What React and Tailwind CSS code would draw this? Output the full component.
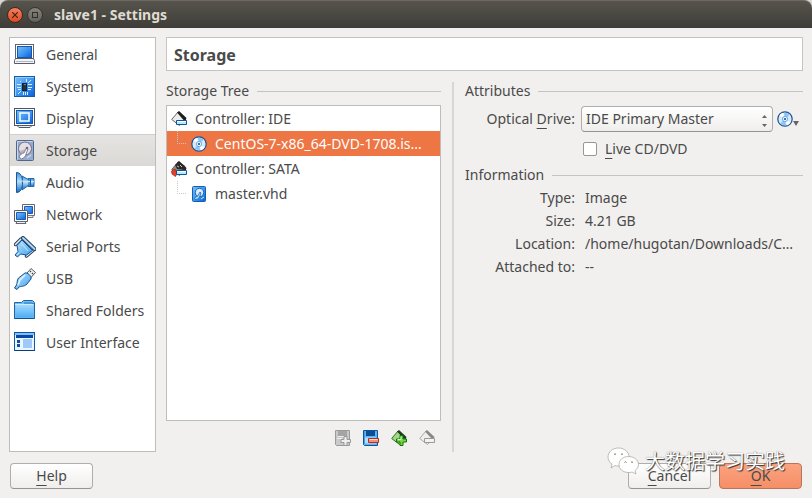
import React, { useState } from "react";

function Gradients() {
  return (
    <svg className="absolute h-0 w-0" aria-hidden="true">
      <defs>
        <linearGradient id="screen" x1="0" y1="0" x2="1" y2="1">
          <stop offset="0" stopColor="#7dbdf6" />
          <stop offset="0.5" stopColor="#3f97f3" />
          <stop offset="1" stopColor="#0a5fd8" />
        </linearGradient>
        <linearGradient id="sky" x1="0" y1="0" x2="1" y2="1">
          <stop offset="0" stopColor="#c4e5fd" />
          <stop offset="1" stopColor="#3aa0ee" />
        </linearGradient>
        <linearGradient id="folder" x1="0" y1="0" x2="0" y2="1">
          <stop offset="0" stopColor="#a6daff" />
          <stop offset="1" stopColor="#49aef5" />
        </linearGradient>
        <linearGradient id="cone" x1="0" y1="0" x2="0" y2="1">
          <stop offset="0" stopColor="#3b93de" />
          <stop offset="0.45" stopColor="#b8dffa" />
          <stop offset="1" stopColor="#1668bd" />
        </linearGradient>
      </defs>
    </svg>
  );
}

function Icon({ children, size = 22 }) {
  return (
    <svg
      width={size}
      height={size}
      viewBox={`0 0 ${size} ${size}`}
      className="shrink-0"
      fill="none"
      aria-hidden="true"
    >
      {children}
    </svg>
  );
}

const GeneralIcon = () => (
  <Icon>
    <rect x="1.5" y="0.5" width="18" height="14" fill="#fff" stroke="#5d6475" />
    <rect x="3.5" y="2.5" width="14" height="11" fill="url(#screen)" stroke="#1d55a8" />
    <path d="M1.5 14.5h18l1 2v3h-20v-3z" fill="#f4f4f7" stroke="#575c6c" />
    <path d="M2 17.5h17" stroke="#b4b7c1" />
  </Icon>
);
const SystemIcon = () => (
  <Icon>
    <rect x="0.500" y="0.500" width="20" height="20" fill="url(#screen)" stroke="#155ba8" />
    <path d="M1.500 20V1.500H20" stroke="#93cdfa" />
    <path d="M3 8.500h4M3 11.500h4M4 13.500h3M14 8.500h4M14 11.500h4M14 13.500h3M9.500 16v3M11.500 16v3M13.500 16v3M12.500 3v3M17 4l-3 3M6 5l1 1M4 18l3-3" stroke="#d8efff" />
    <rect x="8.500" y="7.500" width="4" height="7" fill="#26313d" stroke="#0f2337" />
    <path d="M10 8.500h2" stroke="#79828c" />
  </Icon>
);
const DisplayIcon = () => (
  <Icon>
    <rect x="0.500" y="0.500" width="20" height="17" fill="#fff" stroke="#4e5566" />
    <rect x="2.500" y="2.500" width="16" height="13" fill="url(#screen)" stroke="#145bb5" />
    <rect x="6" y="5" width="9" height="8" stroke="#fff" strokeWidth="1.500" />
    <path d="M3 17.500h15l-2 2H5z" fill="#eee" stroke="#4e5566" />
  </Icon>
);
const StorageIcon = () => (
  <Icon>
    <rect x="2.500" y="0.500" width="17" height="20" rx="1" fill="#95abd0" stroke="#50678c" />
    <path d="M3.500 19.500V1.500h15" stroke="#c8d6ec" />
    <circle cx="11" cy="8.500" r="6.500" fill="#e4dfe4" stroke="#716f86" />
    <path d="M6 11c1 3 3 3 3 3l3-5" fill="#bab2bd" />
    <path d="M5 17c1-2 3-4 5-4l2.500-5 1.500 1-2 5c0 2-2 4-4.500 5z" fill="#fff" stroke="#6b6a80" strokeWidth="0.800" />
    <circle cx="13" cy="8" r="1.300" fill="#79657b" />
    <path d="M13 18l4-3" stroke="#ced9ea" strokeWidth="1.500" />
  </Icon>
);
const AudioIcon = () => (
  <Icon>
    <path d="M14 6.500h6v8h-6z" fill="url(#cone)" stroke="#2669a9" />
    <path d="M8 4l7 4v5l-7 5z" fill="url(#cone)" stroke="#1b68b0" />
    <path d="M2.500 0.500c4 0 6 4 6 10s-2 10-6 10z" fill="url(#cone)" stroke="#17579f" />
    <path d="M8 9l6 0.500h6" stroke="#caeaff" />
    <path d="M16.500 7v7" stroke="#1763b3" />
  </Icon>
);
const NetworkIcon = () => (
  <Icon>
    <path d="M8.500 0.500h12v11h-12z" fill="#fff" stroke="#626878" />
    <path d="M10.500 2.500h8v7h-8z" fill="url(#screen)" stroke="#235ca4" />
    <path d="M13 11.500h6v2h-6z" fill="#eee" stroke="#737887" />
    <path d="M0.500 6.500h13v11h-13z" fill="#fff" stroke="#555d70" />
    <path d="M2.500 8.500h9v7h-9z" fill="url(#screen)" stroke="#235ca4" />
    <path d="M3 17.500h8l1 2H2z" fill="#eee" stroke="#626878" />
  </Icon>
);
const SerialIcon = () => (
  <Icon>
    <path d="M7 3L1.500 8.500M19.500 14l-7 6" stroke="#243d5c" strokeWidth="3.500" strokeLinecap="round" />
    <path d="M7 3L1.500 8.500M19.500 14l-7 6" stroke="#e6eef4" strokeWidth="1.500" strokeLinecap="round" />
    <path d="M8 4l10.500 10.500-6 4.500-6-1-3 3-2.500-2 3-3.500-1-6z" fill="url(#sky)" stroke="#155794" />
    <path d="M9 2l11.500 11" stroke="#22436b" strokeWidth="4" strokeLinecap="round" />
    <path d="M9 2l11.500 11" stroke="#b5d5ec" strokeWidth="2" strokeLinecap="round" />
    <path d="M7 7l7 8M5 17l-2 2" stroke="#c9e8fd" />
  </Icon>
);
const UsbIcon = () => (
  <Icon>
    <path d="M13 5l4-4.500 4.500 4-4.500 5z" fill="#f3f2f2" stroke="#555a63" />
    <path d="M16 4l1-1M18 6l1-1" stroke="#444" strokeWidth="1.400" />
    <path d="M11 5c2-1 7 3 6 6l-4 5c-3 3-6 2-8 3l-2 2.500-2.500-1.500 2-3c1-2 0-4 2-7z" fill="url(#sky)" stroke="#17538b" />
    <path d="M11 7l-5 5-2 5" stroke="#e5f6ff" strokeWidth="1.500" />
  </Icon>
);
const FolderIcon = () => (
  <Icon>
    <path d="M0.500 18.500V2.500h7l2-2h9l2 2v16z" fill="#74bdf1" stroke="#1b66a6" />
    <path d="M1.500 4.500h18v13h-18z" fill="url(#folder)" />
    <path d="M1 4.500h19" stroke="#ccecff" />
    <path d="M10 3h8l2 1" stroke="#2676b7" />
    <path d="M0.500 18.500h20" stroke="#14528c" />
  </Icon>
);
const InterfaceIcon = () => (
  <Icon>
    <rect x="0.500" y="0.500" width="20" height="18" fill="#e9f5ff" stroke="#1456a5" />
    <path d="M1 1h19v2H1z" fill="#82bdf4" />
    <path d="M2 3h17v3H2z" fill="#0648a5" />
    <path d="M3 8h3v3H3zM3 12h3v3H3z" fill="#174f9c" />
    <path d="M9 7h9v9H9z" fill="#9fc9fa" />
    <path d="M0.500 18.500h20" stroke="#083d7d" />
  </Icon>
);

function Disc() {
  return (
    <Icon size={16}>
      <circle cx="8" cy="8" r="7.200" fill="#d5eafb" stroke="#1b5196" strokeWidth="1.200" />
      <path d="M8 8L2.500 4.500A6.500 6.500 0 0 1 6 1.800zM8 8l5.500 3.500a6.500 6.500 0 0 1-3.500 2.700z" fill="#fff" />
      <path d="M8 8L7 1.700a6.300 6.300 0 0 1 5.500 2zM8 8l1 6.300a6.300 6.300 0 0 1-5.500-2z" fill="#8fc3f0" />
      <circle cx="8" cy="8" r="3" fill="#6daeea" />
      <circle cx="8" cy="8" r="2" fill="#fff" />
      <circle cx="8" cy="8" r="1.100" fill="#164a96" />
    </Icon>
  );
}
function HardDisk() {
  return (
    <Icon size={16}>
      <rect x="1.500" y="0.500" width="13" height="15" rx="1" fill="url(#screen)" stroke="#1560ac" />
      <circle cx="8.500" cy="6.500" r="4.200" fill="#d5ecff" stroke="#1767b6" />
      <path d="M3.500 12.500c1-2 3-2 3-2L9 6l1 1-1.500 4c-1 2-3 3-5 2z" fill="#b1dcfb" stroke="#1763ae" strokeWidth="0.800" />
      <path d="M10 13l3-2" stroke="#cfe8ff" />
    </Icon>
  );
}
function Controller({ sata }) {
  return (
    <Icon size={16}>
      <path d="M7 1l7.500 7.500-6 6L0.700 8.500z" fill={sata ? "#8a8a8a" : "#ececec"} stroke="#666" />
      <path d="M6 1.500L8 0l7.500 7-1 2.500-2-0.500z" fill="#1d1d1d" />
      {sata && <path d="M4 4l4-3.500 6 4.500 1 4-9-1z" fill="#2d2b29" />}
      {sata && <path d="M6 5l2 1M9 4l2 2" stroke="#c9c2bd" />}
      {sata && <path d="M4 8l-3.500 2 0.500 3 3.500 2.500 1.500-3z" fill="#e4402b" stroke="#a92012" strokeWidth="0.700" />}
      <path d="M5.500 9.500h10v4h-10z" fill="#bae8ff" stroke="#0b559a" />
      <path d="M6 10.500h9" stroke="#fff" />
    </Icon>
  );
}

function AddAttachment() {
  return (
    <Icon size={16}>
      <path d="M0.500 0.500h14v15h-13l-1-1z" fill="#c9c9c9" stroke="#9a9a9a" />
      <path d="M3 1h9v5H3z" fill="#a4a4a4" />
      <path d="M3 6.500h9M2 8.500h5" stroke="#eee" />
      <path d="M9 6.500h3v3h3.500v3H12v3H9v-3H6v-3h3z" fill="#eee" stroke="#999" />
    </Icon>
  );
}
function RemoveAttachment() {
  return (
    <Icon size={16}>
      <path d="M0.500 0.500h14v15h-13l-1-1z" fill="#62b3f2" stroke="#08569d" />
      <path d="M3 1h9v5H3z" fill="#0a4e96" />
      <path d="M2 7.500h11v6H2z" fill="#b2defc" />
      <path d="M1.500 1v13" stroke="#4e9edf" />
      <path d="M5.500 8.500h10v4h-10z" fill="#f58e73" stroke="#b72b20" />
      <path d="M6.500 9.500h8" stroke="#ffe0d5" />
    </Icon>
  );
}
function AddController() {
  return (
    <Icon size={16}>
      <path d="M7 1l7.500 7.500-6 6L0.700 8.500z" fill="#a5d58a" stroke="#267414" />
      <path d="M6 1.500L8 0l7.500 7-1 2-2-0.500z" fill="#203b1b" />
      <path d="M9 5.500h3v3.500h3.500v3H12v3.500H9V12H5.500V9H9z" fill="#72d847" stroke="#197008" />
      <path d="M10 6.500v3H6.500" stroke="#d5ffbd" />
    </Icon>
  );
}
function RemoveController() {
  return (
    <Icon size={16}>
      <path d="M7 1l7.500 7.500-6 6L0.700 8.500z" fill="#eee" stroke="#aaa" />
      <path d="M6 1.500L8 0l7.500 7-1 2-2-0.500z" fill="#888" />
      <path d="M5.500 8.500h10v4h-10z" fill="#f2f2f2" stroke="#999" />
    </Icon>
  );
}

const pages = [
  ["General", GeneralIcon],
  ["System", SystemIcon],
  ["Display", DisplayIcon],
  ["Storage", StorageIcon],
  ["Audio", AudioIcon],
  ["Network", NetworkIcon],
  ["Serial Ports", SerialIcon],
  ["USB", UsbIcon],
  ["Shared Folders", FolderIcon],
  ["User Interface", InterfaceIcon],
];

const tools = [
  ["Add attachment", AddAttachment, true],
  ["Remove attachment", RemoveAttachment, false],
  ["Add controller", AddController, false],
  ["Remove controller", RemoveController, true],
];

const details = [
  ["Type:", "Image"],
  ["Size:", "4.21 GB"],
  ["Location:", "/home/hugotan/Downloads/C…"],
  ["Attached to:", "--"],
];

function GroupTitle({ children }) {
  return (
    <h2 className="flex h-[18px] items-center gap-2 whitespace-nowrap">
      {children}
      <span className="h-px flex-1 bg-[#c6c4c0]" />
    </h2>
  );
}

function Branch() {
  return (
    <svg width="24" height="25" viewBox="0 0 24 25" className="shrink-0" fill="none" aria-hidden="true">
      <path d="M10.500 0v12.500H20" stroke="#cbc6c1" strokeDasharray="1 1" />
    </svg>
  );
}

function DialogButton({ mnemonic, rest, primary }) {
  return (
    <button
      type="button"
      className={
        "h-[26px] w-[83px] rounded border text-center leading-6 " +
        (primary
          ? "border-[#b8745c] bg-linear-to-b from-[#fba380] to-[#f58e66]"
          : "border-[#b0aeaa] border-b-[#969490] bg-linear-to-b from-white to-[#efeeec]")
      }
    >
      <u className="underline-offset-4">{mnemonic}</u>
      {rest}
    </button>
  );
}

function Watermark() {
  return (
    <div className="pointer-events-none absolute right-[27px] bottom-[23px] flex items-center gap-1.5">
      <svg width="32" height="28" viewBox="0 0 32 28" fill="#fff" stroke="#a5a29e" strokeWidth="0.700" aria-hidden="true">
        <path d="M11.500 1C5.500 1 1 5 1 10c0 3 1.500 5.500 4 7l-1 4 4-2.500c1 .5 2.500.5 4 .5C18 19 22 15 22 10S17.500 1 11.500 1z" />
        <path d="M21.500 9.500C16 9.500 12 13 12 17.500s4 8 9.500 8c1.500 0 2.500 0 3.500-.5l4 2-1-3.500c2-1.500 3.500-3.500 3.500-6 0-4.500-4.500-8-10-8z" />
        <g stroke="#77736f" fill="none" strokeWidth="1">
          <path d="M7 7.500q1-1.500 2 0M14 7.500q1-1.500 2 0M17.500 15.500q1-1.500 2 0M24 15.500q1-1.500 2 0" />
        </g>
      </svg>
      <span className="font-['Noto_Sans_CJK_SC',sans-serif] text-[20px] leading-6 text-white [text-shadow:1px_1px_1px_#333,0_0_1px_#777]">
        大数据学习实践
      </span>
    </div>
  );
}

export default function App() {
  const [page, setPage] = useState("Storage");
  return (
    <div className="relative flex min-h-screen flex-col bg-[#f1f0ee] font-['Noto_Sans',sans-serif] text-[14px] leading-[18px] text-[#4a4a4a]">
      <Gradients />
      <div className="bg-[#d8d6d3]">
        <header className="flex h-7 items-center gap-1 rounded-t-lg border-t border-[#6b6962] bg-linear-to-b from-[#56544c] to-[#3e3d38] pl-[7px]">
          <button type="button" aria-label="Close" className="flex h-4 w-4 items-center justify-center rounded-full border border-[#3a2a22] bg-linear-to-b from-[#f4805c] to-[#df4a1b]">
            <svg width="6" height="6" viewBox="0 0 6 6" aria-hidden="true"><path d="M0 0l6 6M6 0L0 6" stroke="#432218" strokeWidth="1.200" /></svg>
          </button>
          <button type="button" aria-label="Maximize" className="flex h-4 w-4 items-center justify-center rounded-full border border-[#353430] bg-linear-to-b from-[#85837b] to-[#64625b]">
            <span className="h-1.5 w-1.5 border border-[#302f2b]" />
          </button>
          <h1 className="pl-[7px] font-bold text-[#dfdbd2]">slave1 - Settings</h1>
        </header>
      </div>

      <div className="flex flex-1 gap-[10px] px-[9px] pt-[9px]">
        <nav className="w-[147px] shrink-0 border border-[#bfbdb9] bg-white">
          {pages.map(([name, PageIcon]) => (
            <button
              key={name}
              type="button"
              onClick={() => setPage(name)}
              className={
                "flex h-8 w-full items-center gap-[10px] border-t pt-px pl-1 whitespace-nowrap " +
                (page === name ? "border-t-[#d0cecb] bg-linear-to-b from-[#e6e4e2] to-[#dbd9d6]" : "border-t-transparent")
              }
            >
              <PageIcon />
              {name}
            </button>
          ))}
        </nav>

        <main className="flex min-w-0 flex-1 flex-col gap-[11px]">
          <div className="flex h-[34px] shrink-0 items-center border border-[#c6c4c0] bg-white pt-px pl-[7px] text-[16px] font-bold">
            Storage
          </div>
          <div className="flex flex-1">
            <section className="flex w-[275px] shrink-0 flex-col gap-[5px]">
              <GroupTitle>Storage Tree</GroupTitle>
              <div className="flex flex-1 flex-col">
                <ul className="flex-1 border border-[#bfbdb9] bg-white">
                  <li className="flex h-[25px] items-center gap-2 pl-1">
                    <Controller />
                    Controller: IDE
                  </li>
                  <li className="flex h-[25px] items-center gap-2 bg-[#ee7544] whitespace-nowrap text-white">
                    <span className="flex items-center">
                      <Branch />
                      <Disc />
                    </span>
                    CentOS-7-x86_64-DVD-1708.is...
                  </li>
                  <li className="flex h-[25px] items-center gap-2 pl-1">
                    <Controller sata />
                    Controller: SATA
                  </li>
                  <li className="flex h-[25px] items-center gap-2">
                    <span className="flex items-center">
                      <Branch />
                      <HardDisk />
                    </span>
                    master.vhd
                  </li>
                </ul>
                <div className="flex justify-end gap-3 pt-[9px] pr-[6px] pb-[6px]">
                  {tools.map(([name, ToolIcon, disabled]) => (
                    <button key={name} type="button" aria-label={name} disabled={disabled}>
                      <ToolIcon />
                    </button>
                  ))}
                </div>
              </div>
            </section>

            <div className="mr-[11px] ml-[11px] w-0.5 bg-[#d8d6d3]" />

            <section className="min-w-0 flex-1">
              <GroupTitle>Attributes</GroupTitle>
              <div className="mt-1.5 flex items-center">
                <label htmlFor="drive" className="w-[110px] shrink-0 text-right">
                  Optical <u className="underline-offset-4">D</u>rive:
                </label>
                <div className="ml-[6px] grid flex-1 items-center">
                  <select
                    id="drive"
                    className="col-start-1 row-start-1 h-[26px] w-full appearance-none rounded border border-[#b0aeaa] border-b-[#969490] bg-linear-to-b from-white to-[#efeeec] pl-1"
                  >
                    <option>IDE Primary Master</option>
                  </select>
                  <svg width="5" height="12" viewBox="0 0 5 12" fill="#666" className="pointer-events-none col-start-1 row-start-1 mt-1 mr-[6px] justify-self-end" aria-hidden="true">
                    <path d="M0 3l2.500-3L5 3zM0 9l2.500 3L5 9z" />
                  </svg>
                </div>
                <button type="button" aria-label="Choose disk" className="mr-1 ml-1 flex items-center">
                  <Disc />
                  <svg width="6" height="5" viewBox="0 0 6 5" fill="#666" className="mt-2" aria-hidden="true">
                    <path d="M0 0h6L3 5z" />
                  </svg>
                </button>
              </div>
              <label className="mt-2 ml-[118px] flex h-[18px] items-center gap-2">
                <input type="checkbox" className="h-[14px] w-[14px] appearance-none rounded-xs border border-[#999793] bg-white checked:bg-[#ee7544]" />
                <span><u className="underline-offset-4">L</u>ive CD/DVD</span>
              </label>

              <div className="mt-2">
                <GroupTitle>Information</GroupTitle>
                <dl className="mt-0.5">
                  {details.map(([term, value]) => (
                    <div key={term} className="flex h-[23px] items-center gap-[10px]">
                      <dt className="w-[110px] shrink-0 text-right">{term}</dt>
                      <dd className="whitespace-nowrap">{value}</dd>
                    </div>
                  ))}
                </dl>
              </div>
            </section>
          </div>
        </main>
      </div>

      <footer className="flex gap-2 px-[10px] pt-[11px] pb-[9px]">
        <DialogButton mnemonic="H" rest="elp" />
        <span className="flex-1" />
        <DialogButton mnemonic="C" rest="ancel" />
        <DialogButton mnemonic="O" rest="K" primary />
      </footer>
      <Watermark />
    </div>
  );
}
